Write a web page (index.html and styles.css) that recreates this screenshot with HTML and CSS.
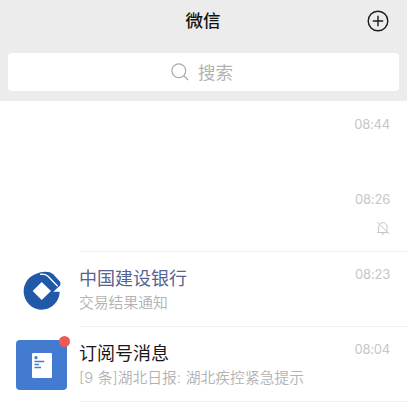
FILE: index.html
```html
<!DOCTYPE html>
<html lang="zh-CN">
<head>
<meta charset="utf-8">
<title>微信</title>
<link rel="stylesheet" href="styles.css">
</head>
<body>
<header class="top">
  <div class="bar">
    <h1 class="title">微信</h1>
    <svg class="add" viewBox="0 0 22 22"><circle cx="11" cy="11" r="9.8"/><path d="M11 5.8v10.4M5.8 11h10.4"/></svg>
  </div>
  <div class="search">
    <svg class="glass" viewBox="0 0 18 18"><circle cx="7.8" cy="7.8" r="6.9"/><path d="M12.8 12.8l4.3 4.2"/></svg>
    <span>搜索</span>
  </div>
</header>
<main class="chats">
  <section class="row">
    <div class="avatar"></div>
    <div class="body plain"><div class="text"></div><time>08:44</time></div>
  </section>
  <section class="row">
    <div class="avatar"></div>
    <div class="body"><div class="text"></div>
      <div class="meta"><time>08:26</time>
        <svg class="mute" viewBox="0 0 14 14"><path d="M1.2 11.5h11M2.6 11.2V5.8a4.2 4.2 0 0 1 8.4 0v5.4M5.4 13h2.8M1 .8l12.4 12.4"/></svg>
      </div>
    </div>
  </section>
  <section class="row">
    <div class="avatar">
      <svg class="bank" viewBox="0 0 165 165">
        <path class="ink" d="M62 36Q76 29 92 29Q106 29 114 36L136 60V70L115 89H134A54 55 0 1 1 62 36Z"/>
        <path class="paper" d="M80 60L108 87L80 114L53 87Z"/>
        <path class="slit" d="M75 37Q90 35 99 43L128 73"/>
      </svg>
    </div>
    <div class="body"><div class="text"><h2 class="name brand">中国建设银行</h2><p class="note">交易结果通知</p></div><time>08:23</time></div>
  </section>
  <section class="row">
    <div class="avatar feed">
      <svg class="doc" viewBox="0 0 20 25"><rect class="paper" width="20" height="25" rx="1.2"/><circle class="mark" cx="4" cy="4.7" r="1.6"/><path class="lines" d="M2.5 8.5h9.7M2.5 11.5h4.5M2.5 14.5h6.6"/></svg>
      <i class="badge"></i>
    </div>
    <div class="body"><div class="text"><h2 class="name">订阅号消息</h2><p class="note digest"><span class="count">[9 条]</span>湖北日报: 湖北疾控紧急提示</p></div><time>08:04</time></div>
  </section>
</main>
</body>
</html>
```
FILE: styles.css
```css
* { box-sizing: border-box; }
body {
  margin: 0;
  background: #fff;
  font-family: Inter, "Noto Sans CJK SC", sans-serif;
  overflow: hidden;
}
h1, h2, p { margin: 0; font-weight: 400; }
svg { display: block; fill: none; }
.top { height: 101px; padding: 0 8px; background: #ececec; }
.bar {
  height: 53px;
  display: grid;
  grid-template-columns: 1fr auto 1fr;
  align-items: start;
}
.title {
  grid-column: 2;
  margin-left: -1px;
  padding-top: 8px;
  font-size: 17.5px;
  line-height: 26px;
  font-weight: 500;
  color: #111;
}
.add {
  width: 22px;
  height: 22px;
  margin: 10px 10px 0 0;
  justify-self: end;
  stroke: #1c1c1c;
  stroke-width: 1.4;
}
.search {
  height: 38px;
  padding-right: 3px;
  border-radius: 4px;
  background: #fff;
  display: flex;
  align-items: center;
  justify-content: center;
  gap: 9px;
  font-size: 17.5px;
  line-height: 26px;
  color: #b2b2b2;
}
.search span { padding-top: 2px; }
.glass { width: 18px; height: 18px; stroke: #aaa; stroke-width: 1.2; }
.chats { padding-top: .5px; }
.row { height: 75.2px; display: flex; }
.avatar {
  width: 50px;
  height: 50px;
  margin: 13px 13px 0 16px;
  flex: none;
  position: relative;
}
.bank { width: 55px; height: 55px; margin: -3px 0 0 -1px; }
.ink { fill: #2159a8; }
.paper { fill: #fff; }
.slit { stroke: #fff; stroke-width: 4; }
.feed {
  width: 51px;
  margin-right: 12px;
  background: #427bd0;
  border-radius: 4px;
  display: grid;
  place-items: center;
}
.doc { width: 20px; height: 25px; }
.mark { fill: #427bd0; }
.lines { stroke: #427bd0; stroke-width: 1.6; }
.badge {
  position: absolute;
  top: -4px;
  right: -3px;
  width: 11px;
  height: 11px;
  border-radius: 50%;
  background: #ec5a58;
}
.body {
  flex: 1;
  display: flex;
  justify-content: space-between;
  padding: 12px 17px 0 0;
  border-bottom: 1px solid #f0f0f0;
}
.plain { border-bottom-color: transparent; }
.name {
  font-size: 18px;
  line-height: 26px;
  margin-top: 2px;
  color: #181818;
  white-space: nowrap;
}
.brand { color: #56648f; }
.note {
  font-size: 14.8px;
  line-height: 22px;
  color: #b2b2b2;
  font-weight: 350;
  white-space: nowrap;
}
.digest { word-spacing: .5px; }
time {
  display: block;
  font-size: 13px;
  line-height: 20px;
  letter-spacing: -.2px;
  color: #c6c6c6;
}
.mute {
  width: 14px;
  height: 14px;
  margin: 12px 0 0 auto;
  stroke: #c6c6c6;
  stroke-width: 1;
}
```
